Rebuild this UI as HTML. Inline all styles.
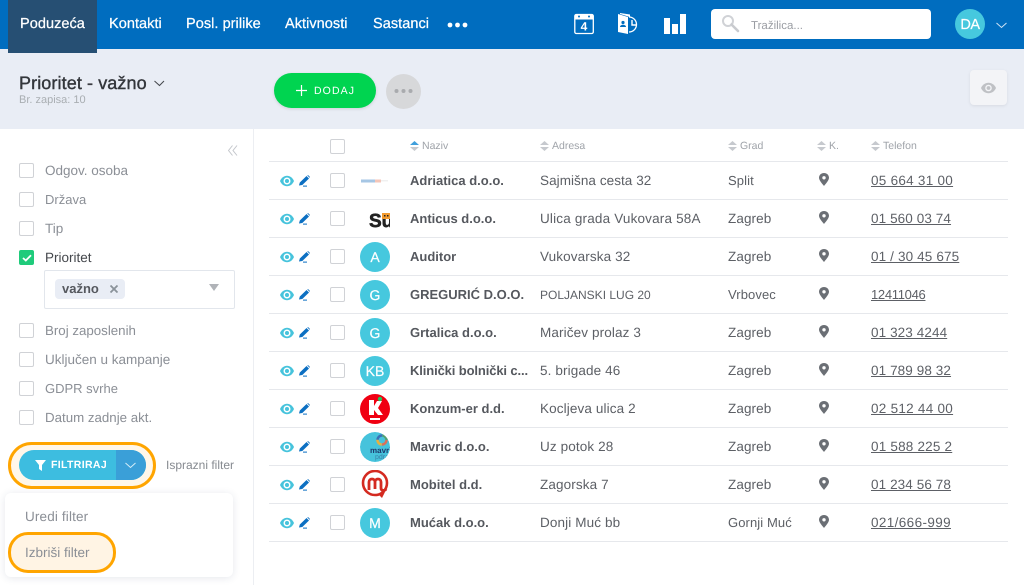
<!DOCTYPE html>
<html><head><meta charset="utf-8"><style>
*{box-sizing:border-box}
html,body{margin:0;padding:0}
body{width:1024px;height:585px;overflow:hidden;background:#fff;position:relative;font-family:"Liberation Sans",sans-serif;font-size:13px;color:#555a60;text-rendering:geometricPrecision}
.a,.t,.cb,.av,.ln,svg.i{position:absolute}
.t{white-space:nowrap;line-height:16px}
.nav{color:#fff;font-size:14.500px;top:16px;letter-spacing:.05px;-webkit-text-stroke:.25px #fff}
.side{color:#8b8f96;font-size:13.500px;left:45px}
.cb{width:15px;height:15px;border:1px solid #d0d2d6;border-radius:2px;background:#fff}
.av{width:30px;height:30px;border-radius:50%;background:#46c8de;color:#fff;text-align:center;line-height:30px;font-size:14px;left:360px;-webkit-text-stroke:.2px #fff}
.ln{left:269px;width:739px;height:1px;background:#e6e8ec}
.n{left:410px;font-weight:bold;color:#55585e}
.ad{left:540px;color:#5d6066;font-size:13.500px;letter-spacing:.12px}
.c{left:728px;color:#5d6066;font-size:13.500px;letter-spacing:.1px}
.p{left:871px;color:#5d6066;text-decoration:underline;font-size:13.500px;letter-spacing:.1px}
.h{font-size:10.500px;color:#9fa3a9;top:138px}
</style></head><body>
<svg width="0" height="0" style="position:absolute"><defs>
<g id="eye"><path d="M0 6C3 -1 11 -1 14 6 11 13 3 13 0 6Z" fill="#46c3dc"/><circle cx="7" cy="6" r="3.500" fill="#fff"/><circle cx="7" cy="6" r="2" fill="#46c3dc"/></g>
<g id="pen"><path d="M0 10.500 .8 7.500 7.500 1 10 3.500 3.300 10Z" fill="#0b6fc2"/><path d="M8.300 .4 9 0l2 2-.5.8Z" fill="#0b6fc2"/><rect x="4" y="10.600" width="4" height="1" fill="#0b6fc2"/></g>
<g id="pin"><path d="M5 0C2 0 0 2.200 0 4.800 0 7.500 3.500 11 5 13 6.500 11 10 7.500 10 4.800 10 2.200 8 0 5 0Z" fill="#6b6f75"/><circle cx="5" cy="4.800" r="1.700" fill="#fff"/></g>
<g id="sort"><path d="M4.500 0 9 4H0Z M0 6h9L4.500 10Z" fill="#c6c9ce"/></g>
<clipPath id="cc"><circle cx="15" cy="15" r="15"/></clipPath>
</defs></svg>

<!-- top nav -->
<div class="a" style="left:0;top:0;width:1024px;height:49px;background:#006dbf"></div>
<div class="a" style="left:0;top:49px;width:1024px;height:80px;background:#e9edf5"></div>
<div class="a" style="left:8px;top:0;width:89px;height:53px;background:#264f73"></div>
<div class="t nav" style="left:20px">Poduzeća</div>
<div class="t nav" style="left:109px">Kontakti</div>
<div class="t nav" style="left:186px">Posl. prilike</div>
<div class="t nav" style="left:285px">Aktivnosti</div>
<div class="t nav" style="left:373px">Sastanci</div>
<svg class="i" style="left:447px;top:22px" width="21" height="6"><circle cx="3" cy="3" r="2.400" fill="#fff"/><circle cx="10.500" cy="3" r="2.400" fill="#fff"/><circle cx="18" cy="3" r="2.400" fill="#fff"/></svg>

<!-- calendar -->
<svg class="i" style="left:574px;top:13px" width="22" height="22"><rect x=".8" y="1.500" width="18.500" height="19" rx="1.500" fill="none" stroke="#fff" stroke-width="1.300"/><rect x="1" y="1.500" width="18" height="5" fill="#fff"/><circle cx="5" cy="3.500" r="1" fill="#006dbf"/><circle cx="15" cy="3.500" r="1" fill="#006dbf"/><text x="10" y="17.500" text-anchor="middle" font-family="Liberation Sans" font-weight="bold" font-size="12" fill="#fff">4</text></svg>
<!-- contact clock -->
<svg class="i" style="left:617px;top:12px" width="24" height="24"><path d="M1 2 11 5V22L1 20Z M3 1 13 2.500V5L3 2Z" fill="#fff"/><circle cx="6" cy="10.500" r="1.600" fill="#006dbf"/><path d="M3 15c0-3 6-3 6 0Z" fill="#006dbf"/><path d="M12 5a7.500 7.500 0 1 1 0 15" fill="none" stroke="#fff" stroke-width="1.300"/><path d="M15 8v5h4" fill="none" stroke="#fff" stroke-width="1.400"/></svg>
<!-- bars -->
<svg class="i" style="left:664px;top:14px" width="22" height="20"><rect x="0" y="4" width="6" height="16" fill="#fff"/><rect x="8" y="10" width="6" height="10" fill="#fff"/><rect x="16" y="0" width="6" height="20" fill="#fff"/></svg>

<!-- search -->
<div class="a" style="left:711px;top:9px;width:220px;height:30px;background:#fff;border-radius:4px"></div>
<svg class="i" style="left:721px;top:14px" width="20" height="20"><circle cx="7" cy="7" r="5" fill="none" stroke="#d0d2d6" stroke-width="2"/><path d="M10.500 10.500 17 17" stroke="#c9cbcf" stroke-width="2.600" stroke-linecap="round"/></svg>
<div class="t" style="left:751px;top:18px;font-size:11.500px;color:#9a9da3">Tražilica...</div>
<div class="av" style="left:955px;top:9px;font-size:14.500px;letter-spacing:-.5px;line-height:32px">DA</div>
<svg class="i" style="left:996px;top:22px" width="11" height="7"><path d="M.5 1 5.500 5.500 10.500 1" fill="none" stroke="#cfe4f5" stroke-width="1"/></svg>

<!-- header band -->
<div class="t" style="left:19px;top:73px;font-size:18px;line-height:20px;color:#33363b;letter-spacing:.1px;-webkit-text-stroke:.4px #33363b">Prioritet - važno</div>
<svg class="i" style="left:154px;top:80px" width="11" height="7"><path d="M.5 1 5.500 5.500 10 1" fill="none" stroke="#44474c" stroke-width="1"/></svg>
<div class="t" style="left:19px;top:93px;font-size:11px;line-height:14px;color:#a9aeb2">Br. zapisa: 10</div>
<div class="a" style="left:274px;top:73px;width:102px;height:35px;border-radius:18px;background:#00d450;box-shadow:0 1px 3px rgba(0,0,0,.12)"></div>
<svg class="i" style="left:296px;top:85px" width="11" height="11"><path d="M5.500 0V11M0 5.500H11" stroke="#fff" stroke-width="1.200"/></svg>
<div class="t" style="left:314px;top:83px;color:#fff;font-size:10.500px;letter-spacing:1.100px">DODAJ</div>
<div class="a" style="left:386px;top:74px;width:35px;height:35px;border-radius:50%;background:#d7d8da"></div>
<svg class="i" style="left:393px;top:88px" width="21" height="6"><circle cx="3.500" cy="3" r="2" fill="#a9abae"/><circle cx="10.500" cy="3" r="2" fill="#a9abae"/><circle cx="17.500" cy="3" r="2" fill="#a9abae"/></svg>
<div class="a" style="left:970px;top:70px;width:37px;height:35px;background:#f3f4f7;border-radius:4px;box-shadow:0 1px 3px rgba(0,0,0,.08)"></div>
<svg class="i" style="left:981px;top:82px" width="15" height="12"><path d="M0 6C3 -1 12 -1 15 6 12 13 3 13 0 6Z" fill="#bfc1c5"/><circle cx="7.500" cy="6" r="3.300" fill="#f3f4f7"/><circle cx="7.500" cy="6" r="1.900" fill="#bfc1c5"/></svg>

<!-- sidebar -->
<div class="a" style="left:253px;top:129px;width:1px;height:456px;background:#eceef2"></div>
<svg class="i" style="left:228px;top:145px" width="10" height="11"><path d="M4.500 .5 .5 5.500 4.500 10.500M9 .5 5 5.500 9 10.500" fill="none" stroke="#c3c6cb" stroke-width="1"/></svg>
<div class="cb" style="left:19px;top:163px"></div><div class="t side" style="top:163px">Odgov. osoba</div>
<div class="cb" style="left:19px;top:192px"></div><div class="t side" style="top:192px;font-size:13px">Država</div>
<div class="cb" style="left:19px;top:221px"></div><div class="t side" style="top:221px">Tip</div>
<div class="cb" style="left:19px;top:250px;background:#1fcb7b;border-color:#1fcb7b"></div>
<svg class="i" style="left:22px;top:254px" width="10" height="8"><path d="M1 4 3.800 6.500 9 1.200" fill="none" stroke="#fff" stroke-width="1.800"/></svg>
<div class="t side" style="top:250px;color:#45484d">Prioritet</div>
<div class="a" style="left:44px;top:270px;width:191px;height:39px;border:1px solid #e2e6ec;border-radius:2px"></div>
<div class="a" style="left:55px;top:279px;width:70px;height:20px;background:#e9edf5;border-radius:4px"></div>
<div class="t" style="left:62px;top:281px;font-weight:bold;color:#55585e">važno</div>
<svg class="i" style="left:110px;top:285px" width="8" height="8"><path d="M.5 .5 7.500 7.500M7.500 .5 .5 7.500" stroke="#8a9299" stroke-width="1.800"/></svg>
<svg class="i" style="left:209px;top:284px" width="10" height="7"><path d="M0 0H10L5 7Z" fill="#b0b3b8"/></svg>
<div class="cb" style="left:19px;top:323px"></div><div class="t side" style="top:323px;font-size:13.300px">Broj zaposlenih</div>
<div class="cb" style="left:19px;top:352px"></div><div class="t side" style="top:352px">Uključen u kampanje</div>
<div class="cb" style="left:19px;top:381px"></div><div class="t side" style="top:381px;font-size:13px">GDPR svrhe</div>
<div class="cb" style="left:19px;top:410px"></div><div class="t side" style="top:410px;font-size:13.300px">Datum zadnje akt.</div>

<!-- filter button -->
<div class="a" style="left:8px;top:442px;width:148px;height:47px;border:3px solid #ffa500;border-radius:24px;background:#fff7ea"></div>
<div class="a" style="left:19px;top:450px;width:127px;height:30px;border-radius:15px;background:#3dbde0;overflow:hidden"><div class="a" style="left:97px;top:0;width:30px;height:30px;background:#3a9fd8"></div></div>
<svg class="i" style="left:35px;top:460px" width="11" height="11"><path d="M0 0H11L7 5V11L4 9V5Z" fill="#fff"/></svg>
<div class="t" style="left:51px;top:457px;color:#fff;font-size:10.500px;font-weight:bold;letter-spacing:.35px">FILTRIRAJ</div>
<svg class="i" style="left:125px;top:462px" width="11" height="7"><path d="M.5 1 5.500 5.500 10.500 1" fill="none" stroke="#d5eef8" stroke-width="1"/></svg>
<div class="t" style="left:166px;top:457px;font-size:12px;color:#868a90">Isprazni filter</div>

<!-- dropdown -->
<div class="a" style="left:5px;top:493px;width:228px;height:84px;background:#fff;border-radius:6px;box-shadow:0 1px 8px rgba(40,60,100,.12)"></div>
<div class="t" style="left:25px;top:509px;color:#8b8f96;font-size:13.500px;letter-spacing:.15px">Uredi filter</div>
<div class="a" style="left:8px;top:532px;width:108px;height:41px;border:3px solid #ffa500;border-radius:20px;background:#fff4e4"></div>
<div class="t" style="left:25px;top:545px;color:#8b8f96;font-size:13.500px">Izbriši filter</div>

<!-- table header -->
<div class="cb" style="left:330px;top:139px"></div>
<svg class="i" style="left:410px;top:141px" width="9" height="10"><path d="M4.500 0 9 4H0Z" fill="#3f9fdc"/><path d="M0 6h9L4.500 10Z" fill="#c6c9ce"/></svg>
<div class="t h" style="left:422px;top:138px">Naziv</div>
<svg class="i" style="left:540px;top:141px" width="9" height="10"><use href="#sort"/></svg><div class="t h" style="left:552px">Adresa</div>
<svg class="i" style="left:728px;top:141px" width="9" height="10"><use href="#sort"/></svg><div class="t h" style="left:740px">Grad</div>
<svg class="i" style="left:817px;top:141px" width="9" height="10"><use href="#sort"/></svg><div class="t h" style="left:829px">K.</div>
<svg class="i" style="left:871px;top:141px" width="9" height="10"><use href="#sort"/></svg><div class="t h" style="left:883px">Telefon</div>

<!-- lines -->
<div class="ln" style="top:161px"></div><div class="ln" style="top:199px"></div><div class="ln" style="top:237px"></div><div class="ln" style="top:275px"></div><div class="ln" style="top:313px"></div><div class="ln" style="top:351px"></div><div class="ln" style="top:389px"></div><div class="ln" style="top:427px"></div><div class="ln" style="top:465px"></div><div class="ln" style="top:503px"></div><div class="ln" style="top:541px"></div>

<!-- row icons -->
<svg class="i" style="left:280px;top:175px" width="32" height="12"><use href="#eye"/><use href="#pen" x="19"/></svg>
<svg class="i" style="left:280px;top:213px" width="32" height="12"><use href="#eye"/><use href="#pen" x="19"/></svg>
<svg class="i" style="left:280px;top:251px" width="32" height="12"><use href="#eye"/><use href="#pen" x="19"/></svg>
<svg class="i" style="left:280px;top:289px" width="32" height="12"><use href="#eye"/><use href="#pen" x="19"/></svg>
<svg class="i" style="left:280px;top:327px" width="32" height="12"><use href="#eye"/><use href="#pen" x="19"/></svg>
<svg class="i" style="left:280px;top:365px" width="32" height="12"><use href="#eye"/><use href="#pen" x="19"/></svg>
<svg class="i" style="left:280px;top:403px" width="32" height="12"><use href="#eye"/><use href="#pen" x="19"/></svg>
<svg class="i" style="left:280px;top:441px" width="32" height="12"><use href="#eye"/><use href="#pen" x="19"/></svg>
<svg class="i" style="left:280px;top:479px" width="32" height="12"><use href="#eye"/><use href="#pen" x="19"/></svg>
<svg class="i" style="left:280px;top:517px" width="32" height="12"><use href="#eye"/><use href="#pen" x="19"/></svg>

<!-- checkboxes -->
<div class="cb" style="left:330px;top:173px"></div><div class="cb" style="left:330px;top:211px"></div><div class="cb" style="left:330px;top:249px"></div><div class="cb" style="left:330px;top:287px"></div><div class="cb" style="left:330px;top:325px"></div><div class="cb" style="left:330px;top:363px"></div><div class="cb" style="left:330px;top:401px"></div><div class="cb" style="left:330px;top:439px"></div><div class="cb" style="left:330px;top:477px"></div><div class="cb" style="left:330px;top:515px"></div>

<!-- avatars -->
<svg class="i" style="left:360px;top:178px" width="30" height="6"><rect x="1" y="1.500" width="14" height="3" fill="#a6c6e4"/><rect x="15" y="1.500" width="6" height="3" fill="#f4c6b8"/><rect x="21" y="2" width="7" height="1.500" fill="#f0f0f0"/></svg>
<svg class="i" style="left:369px;top:212px" width="21" height="16"><text x="0" y="15" font-family="Liberation Sans" font-weight="bold" font-size="19" fill="#222" stroke="#222" stroke-width=".6">Su</text><rect x="13" y="1" width="8" height="6" fill="#f29a2e"/><rect x="15" y="3" width="1.500" height="1.500" fill="#222"/><rect x="18" y="3" width="1.500" height="1.500" fill="#222"/></svg>
<div class="av" style="top:242px">A</div>
<div class="av" style="top:280px">G</div>
<div class="av" style="top:318px">G</div>
<div class="av" style="top:356px">KB</div>
<svg class="i" style="left:360px;top:394px" width="30" height="30"><circle cx="15" cy="15" r="15" fill="#f00012"/><path d="M9 6H14V12L17 7H22L18 14 23 21H18L14 16V21H9Z" fill="#fff"/><circle cx="20" cy="5" r="2.200" fill="#22c55e"/><rect x="10" y="24" width="10" height="2" fill="#fff"/></svg>
<svg class="i" style="left:360px;top:432px" width="30" height="30"><g clip-path="url(#cc)"><circle cx="15" cy="15" r="15" fill="#46c3dc"/><circle cx="22" cy="8" r="4.500" fill="none" stroke="#d9705a" stroke-width="2.500" stroke-dasharray="7 21.300"/><circle cx="22" cy="8" r="4.500" fill="none" stroke="#55a070" stroke-width="2.500" stroke-dasharray="7 21.300" stroke-dashoffset="7"/><circle cx="22" cy="8" r="4.500" fill="none" stroke="#3a70b8" stroke-width="2.500" stroke-dasharray="7 21.300" stroke-dashoffset="14"/><circle cx="22" cy="8" r="4.500" fill="none" stroke="#e6b040" stroke-width="2.500" stroke-dasharray="7 21.300" stroke-dashoffset="21"/><text x="10" y="21" font-family="Liberation Sans" font-weight="bold" font-size="8" fill="#1d3a6e">mavric</text><text x="15" y="27" font-family="Liberation Sans" font-size="7" fill="#3a80a8">pdrav</text></g></svg>
<svg class="i" style="left:360px;top:470px" width="30" height="30"><circle cx="15" cy="13" r="12" fill="none" stroke="#d42a20" stroke-width="2.600"/><path d="M9 20V12C9 8 15 8 15 12V19M15 12C15 8 21 8 21 12V18C21 21 25 21 26 19" fill="none" stroke="#d42a20" stroke-width="2.800"/><path d="M18 24 22 28 25 22Z" fill="#d42a20"/></svg>
<div class="av" style="top:508px">M</div>

<!-- row text -->
<div class="t n" style="top:173px">Adriatica d.o.o.</div><div class="t ad" style="top:173px;letter-spacing:.06px">Sajmišna cesta 32</div><div class="t c" style="top:173px;font-size:13px">Split</div><div class="t p" style="top:173px;letter-spacing:.27px">05 664 31 00</div>
<div class="t n" style="top:211px">Anticus d.o.o.</div><div class="t ad" style="top:211px;letter-spacing:.18px">Ulica grada Vukovara 58A</div><div class="t c" style="top:211px">Zagreb</div><div class="t p" style="top:211px">01 560 03 74</div>
<div class="t n" style="top:249px">Auditor</div><div class="t ad" style="top:249px">Vukovarska 32</div><div class="t c" style="top:249px">Zagreb</div><div class="t p" style="top:249px;letter-spacing:.14px">01 / 30 45 675</div>
<div class="t n" style="top:287px">GREGURIĆ D.O.O.</div><div class="t ad" style="top:287px;font-size:12px;letter-spacing:0">POLJANSKI LUG 20</div><div class="t c" style="top:287px;font-size:13px">Vrbovec</div><div class="t p" style="top:287px;font-size:13px;letter-spacing:-.3px">12411046</div>
<div class="t n" style="top:325px">Grtalica d.o.o.</div><div class="t ad" style="top:325px">Maričev prolaz 3</div><div class="t c" style="top:325px">Zagreb</div><div class="t p" style="top:325px">01 323 4244</div>
<div class="t n" style="top:363px;letter-spacing:-.12px">Klinički bolnički c...</div><div class="t ad" style="top:363px">5. brigade 46</div><div class="t c" style="top:363px">Zagreb</div><div class="t p" style="top:363px">01 789 98 32</div>
<div class="t n" style="top:401px">Konzum-er d.d.</div><div class="t ad" style="top:401px">Kocljeva ulica 2</div><div class="t c" style="top:401px">Zagreb</div><div class="t p" style="top:401px;letter-spacing:.27px">02 512 44 00</div>
<div class="t n" style="top:439px">Mavric d.o.o.</div><div class="t ad" style="top:439px">Uz potok 28</div><div class="t c" style="top:439px">Zagreb</div><div class="t p" style="top:439px;letter-spacing:.2px">01 588 225 2</div>
<div class="t n" style="top:477px">Mobitel d.d.</div><div class="t ad" style="top:477px">Zagorska 7</div><div class="t c" style="top:477px">Zagreb</div><div class="t p" style="top:477px">01 234 56 78</div>
<div class="t n" style="top:515px">Mućak d.o.o.</div><div class="t ad" style="top:515px">Donji Muć bb</div><div class="t c" style="top:515px;font-size:13px">Gornji Muć</div><div class="t p" style="top:515px;letter-spacing:.38px">021/666-999</div>

<!-- pins -->
<svg class="i" style="left:819px;top:173px" width="10" height="13"><use href="#pin"/></svg>
<svg class="i" style="left:819px;top:211px" width="10" height="13"><use href="#pin"/></svg>
<svg class="i" style="left:819px;top:249px" width="10" height="13"><use href="#pin"/></svg>
<svg class="i" style="left:819px;top:287px" width="10" height="13"><use href="#pin"/></svg>
<svg class="i" style="left:819px;top:325px" width="10" height="13"><use href="#pin"/></svg>
<svg class="i" style="left:819px;top:363px" width="10" height="13"><use href="#pin"/></svg>
<svg class="i" style="left:819px;top:401px" width="10" height="13"><use href="#pin"/></svg>
<svg class="i" style="left:819px;top:439px" width="10" height="13"><use href="#pin"/></svg>
<svg class="i" style="left:819px;top:477px" width="10" height="13"><use href="#pin"/></svg>
<svg class="i" style="left:819px;top:515px" width="10" height="13"><use href="#pin"/></svg>
</body></html>
